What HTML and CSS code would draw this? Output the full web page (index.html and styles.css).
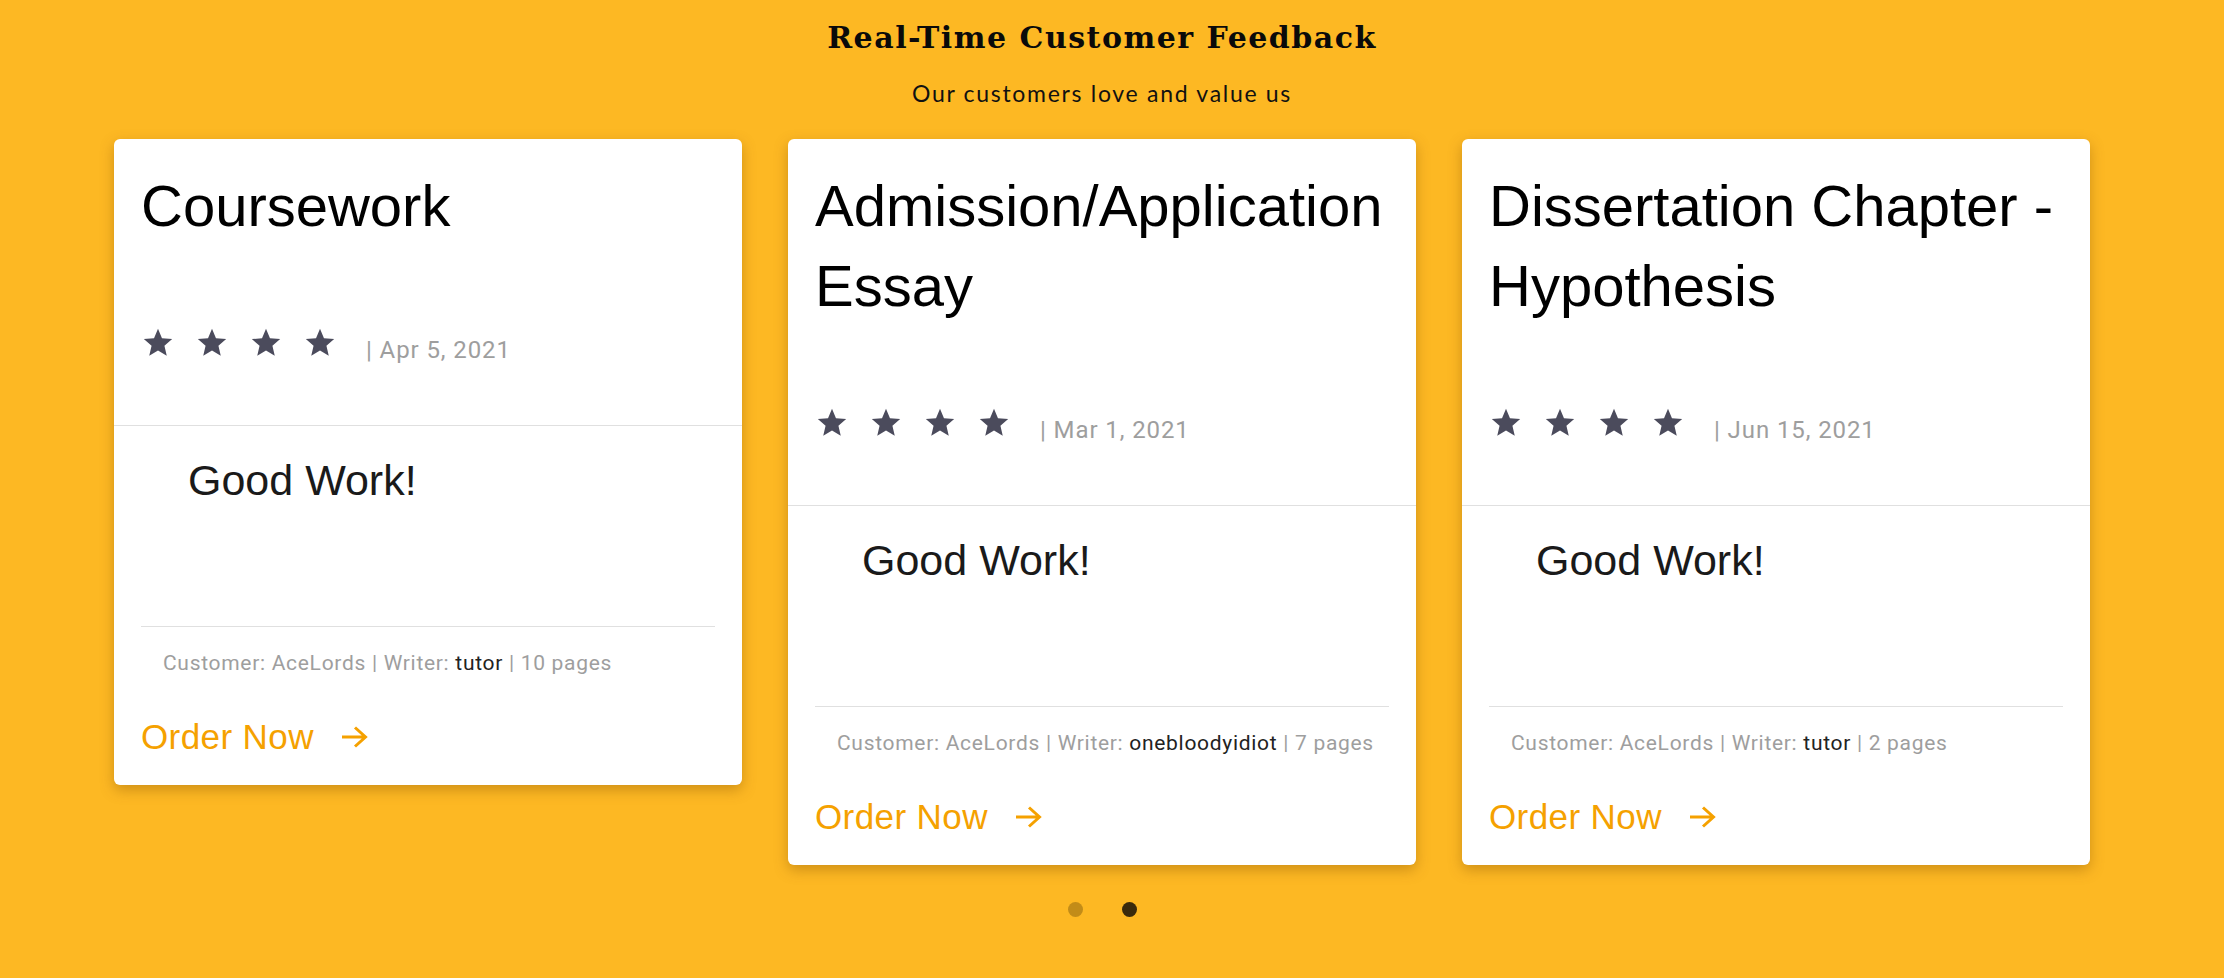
FILE: index.html
```html
<!DOCTYPE html>
<html lang="en">
<head>
<meta charset="utf-8">
<title>Real-Time Customer Feedback</title>
<link rel="stylesheet" href="styles.css">
</head>
<body>
<section class="feedback">
  <h2 class="feedback-title">Real-Time Customer Feedback</h2>
  <p class="feedback-subtitle">Our customers love and value us</p>

  <div class="cards">
    <article class="card">
      <header class="card-head">
        <h3 class="card-title">Coursework</h3>
        <div class="rating">
          <svg class="star" viewBox="0 0 24 24"><path d="M12 17.27L18.18 21l-1.64-7.03L22 9.24l-7.19-.61L12 2 9.19 8.63 2 9.24l5.46 4.73L5.82 21z"/></svg>
          <svg class="star" viewBox="0 0 24 24"><path d="M12 17.27L18.18 21l-1.64-7.03L22 9.24l-7.19-.61L12 2 9.19 8.63 2 9.24l5.46 4.73L5.82 21z"/></svg>
          <svg class="star" viewBox="0 0 24 24"><path d="M12 17.27L18.18 21l-1.64-7.03L22 9.24l-7.19-.61L12 2 9.19 8.63 2 9.24l5.46 4.73L5.82 21z"/></svg>
          <svg class="star" viewBox="0 0 24 24"><path d="M12 17.27L18.18 21l-1.64-7.03L22 9.24l-7.19-.61L12 2 9.19 8.63 2 9.24l5.46 4.73L5.82 21z"/></svg>
          <span class="date">| Apr 5, 2021</span>
        </div>
      </header>
      <div class="card-body">
        <p class="quote">Good Work!</p>
        <p class="meta">Customer: AceLords | Writer: <span class="writer">tutor</span> | 10 pages</p>
        <a class="order" href="#">Order Now <svg class="arrow" viewBox="0 0 27 24"><path d="M1 12H25M14 2.5L24.5 12L14 21.5"/></svg></a>
      </div>
    </article>

    <article class="card">
      <header class="card-head">
        <h3 class="card-title">Admission/Application Essay</h3>
        <div class="rating">
          <svg class="star" viewBox="0 0 24 24"><path d="M12 17.27L18.18 21l-1.64-7.03L22 9.24l-7.19-.61L12 2 9.19 8.63 2 9.24l5.46 4.73L5.82 21z"/></svg>
          <svg class="star" viewBox="0 0 24 24"><path d="M12 17.27L18.18 21l-1.64-7.03L22 9.24l-7.19-.61L12 2 9.19 8.63 2 9.24l5.46 4.73L5.82 21z"/></svg>
          <svg class="star" viewBox="0 0 24 24"><path d="M12 17.27L18.18 21l-1.64-7.03L22 9.24l-7.19-.61L12 2 9.19 8.63 2 9.24l5.46 4.73L5.82 21z"/></svg>
          <svg class="star" viewBox="0 0 24 24"><path d="M12 17.27L18.18 21l-1.64-7.03L22 9.24l-7.19-.61L12 2 9.19 8.63 2 9.24l5.46 4.73L5.82 21z"/></svg>
          <span class="date">| Mar 1, 2021</span>
        </div>
      </header>
      <div class="card-body">
        <p class="quote">Good Work!</p>
        <p class="meta">Customer: AceLords | Writer: <span class="writer">onebloodyidiot</span> | 7 pages</p>
        <a class="order" href="#">Order Now <svg class="arrow" viewBox="0 0 27 24"><path d="M1 12H25M14 2.5L24.5 12L14 21.5"/></svg></a>
      </div>
    </article>

    <article class="card">
      <header class="card-head">
        <h3 class="card-title">Dissertation Chapter - Hypothesis</h3>
        <div class="rating">
          <svg class="star" viewBox="0 0 24 24"><path d="M12 17.27L18.18 21l-1.64-7.03L22 9.24l-7.19-.61L12 2 9.19 8.63 2 9.24l5.46 4.73L5.82 21z"/></svg>
          <svg class="star" viewBox="0 0 24 24"><path d="M12 17.27L18.18 21l-1.64-7.03L22 9.24l-7.19-.61L12 2 9.19 8.63 2 9.24l5.46 4.73L5.82 21z"/></svg>
          <svg class="star" viewBox="0 0 24 24"><path d="M12 17.27L18.18 21l-1.64-7.03L22 9.24l-7.19-.61L12 2 9.19 8.63 2 9.24l5.46 4.73L5.82 21z"/></svg>
          <svg class="star" viewBox="0 0 24 24"><path d="M12 17.27L18.18 21l-1.64-7.03L22 9.24l-7.19-.61L12 2 9.19 8.63 2 9.24l5.46 4.73L5.82 21z"/></svg>
          <span class="date">| Jun 15, 2021</span>
        </div>
      </header>
      <div class="card-body">
        <p class="quote">Good Work!</p>
        <p class="meta">Customer: AceLords | Writer: <span class="writer">tutor</span> | 2 pages</p>
        <a class="order" href="#">Order Now <svg class="arrow" viewBox="0 0 27 24"><path d="M1 12H25M14 2.5L24.5 12L14 21.5"/></svg></a>
      </div>
    </article>
  </div>

  <div class="dots">
    <span class="dot"></span>
    <span class="dot dot-active"></span>
  </div>
</section>
</body>
</html>
```

FILE: styles.css
```css
html, body {
  margin: 0;
  padding: 0;
}

body {
  background: #fdb823;
  width: 2224px;
  height: 978px;
  overflow: hidden;
}

.feedback {
  box-sizing: border-box;
  width: 2224px;
  padding: 20px 20px 0 0;
  display: flex;
  flex-direction: column;
  align-items: center;
}

.feedback-title {
  margin: 0;
  font-family: "DejaVu Serif", "Liberation Serif", serif;
  font-weight: bold;
  font-size: 30px;
  line-height: 35px;
  letter-spacing: 1.5px;
  color: #0a0a0a;
}

.feedback-subtitle {
  margin: 25px 0 0;
  font-family: Lato, "Open Sans", sans-serif;
  font-weight: 400;
  font-size: 23px;
  line-height: 26px;
  letter-spacing: 1.7px;
  color: #111;
}

.cards {
  margin-top: 33px;
  display: flex;
  gap: 46px;
  align-items: flex-start;
}

.card {
  width: 628px;
  background: #fff;
  border-radius: 6px;
  box-shadow: 0 5px 14px rgba(120, 70, 0, 0.35);
  overflow: hidden;
}

.card-head {
  padding: 27px 27px 65px;
  border-bottom: 1px solid #e0e0e0;
}

.card-title {
  margin: 0 0 80px;
  font-family: "Liberation Sans", Arial, sans-serif;
  font-weight: 400;
  font-size: 58px;
  line-height: 80px;
  color: #000;
}

.rating {
  display: flex;
  align-items: flex-end;
  height: 34px;
  gap: 20px;
}

.star {
  width: 34px;
  height: 34px;
  fill: #4b4b5c;
  flex: none;
}

.date {
  margin-left: 9px;
  margin-bottom: -2px;
  font-family: Roboto, "Liberation Sans", sans-serif;
  font-size: 24px;
  line-height: 24px;
  letter-spacing: 0.9px;
  color: #9e9e9e;
}

.card-body {
  padding: 22px 27px 28px;
}

.quote {
  margin: 0;
  min-height: 178px;
  padding-left: 47px;
  font-family: "Liberation Sans", Arial, sans-serif;
  font-size: 43px;
  line-height: 64px;
  color: #1a1a1a;
}

.meta {
  margin: 0;
  border-top: 1px solid #e0e0e0;
  padding: 21px 0 0 22px;
  font-family: Roboto, "Liberation Sans", sans-serif;
  font-size: 21px;
  line-height: 30px;
  letter-spacing: 0.7px;
  color: #9e9e9e;
}

.writer {
  color: #222;
}

.order {
  margin-top: 38px;
  display: flex;
  align-items: center;
  gap: 27px;
  font-family: "Liberation Sans", Arial, sans-serif;
  font-size: 35px;
  line-height: 41px;
  letter-spacing: 0.4px;
  color: #f5a100;
  text-decoration: none;
}

.arrow {
  width: 27px;
  height: 24px;
  fill: none;
  stroke: #f5a100;
  stroke-width: 3;
}

.dots {
  margin-top: 37px;
  display: flex;
  gap: 39px;
}

.dot {
  width: 15px;
  height: 15px;
  border-radius: 50%;
  background: rgba(60, 40, 0, 0.3);
}

.dot-active {
  background: #3a2a0c;
}
```
